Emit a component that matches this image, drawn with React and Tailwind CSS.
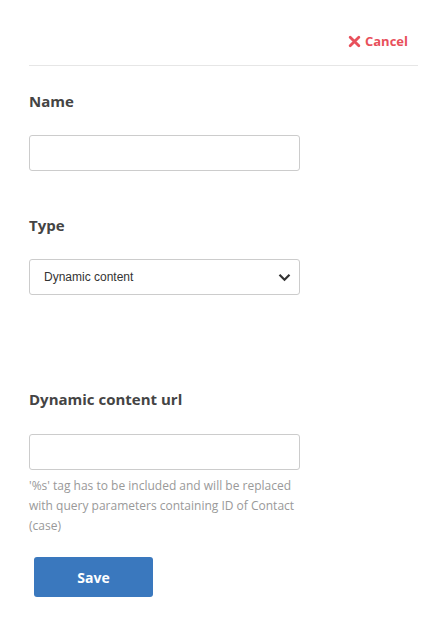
import React from 'react';

const font = { fontFamily: '"Open Sans", sans-serif' };

const App = () => {
  return (
    <div className="min-h-screen bg-white pl-[29px] pr-[17px]" style={font}>
      <div className="flex justify-end items-center h-[66px] border-b border-[#e6e6e6] pt-[18px] pr-[10px]">
        <button className="flex items-center gap-[4px] text-[#e8505b] text-[13px] font-bold">
          <svg width="13" height="13" viewBox="0 0 12 12">
            <path d="M2 2 L10 10 M10 2 L2 10" stroke="#e8505b" strokeWidth="2.6" strokeLinecap="round" />
          </svg>
          Cancel
        </button>
      </div>

      <div className="w-[271px]">
        <label className="block mt-[25px] text-[15px] font-bold text-[#444] leading-[20px]">Name</label>
        <input type="text" className="block mt-[24px] w-full h-[36px] border border-[#ccc] rounded-[3px]" />

        <label className="block mt-[44px] text-[15px] font-bold text-[#444] leading-[20px]">Type</label>
        <div className="relative mt-[24px] h-[36px] border border-[#ccc] rounded-[3px] flex items-center pl-[14px] pr-[8px]">
          <span className="text-[12px] text-[#333]" style={{ fontFamily: '"Liberation Sans", Arial, sans-serif' }}>Dynamic content</span>
          <svg className="ml-auto" width="13" height="9" viewBox="0 0 13 9">
            <path d="M1.5 1.8 L6.5 6.8 L11.5 1.8" fill="none" stroke="#333" strokeWidth="2.2" />
          </svg>
        </div>

        <label className="block mt-[94px] text-[15px] font-bold text-[#444] leading-[20px]">Dynamic content url</label>
        <input type="text" className="block mt-[25px] w-full h-[36px] border border-[#ccc] rounded-[3px]" />
        <p className="mt-[6px] text-[12px] leading-[20px] text-[#999]">
          '%s' tag has to be included and will be replaced with query parameters containing ID of Contact (case)
        </p>

        <button className="mt-[21px] ml-[5px] w-[119px] h-[40px] rounded-[3px] bg-[#3a78be] text-white text-[14px] font-bold">
          Save
        </button>
      </div>
    </div>
  );
};

export default App;
